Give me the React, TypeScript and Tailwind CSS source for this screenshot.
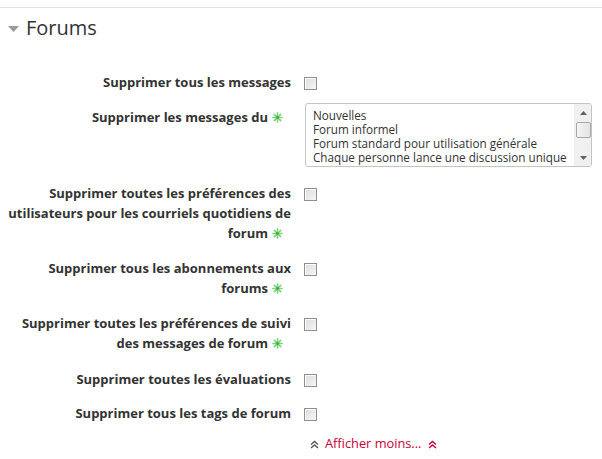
import React from "react";

const FONT = { fontFamily: "'Open Sans', Lato, sans-serif" };

function Check() {
  return (
    <span className="block w-[13px] h-[13px] border border-[#8f8f8f] bg-gradient-to-br from-[#dcdcdc] to-[#f7f7f7] shadow-[inset_1px_1px_0_#ffffff]" />
  );
}

function Star() {
  return (
    <svg width="11" height="11" viewBox="0 0 12 12" className="inline-block ml-[4px] mr-[8px] align-[-1px]">
      <g stroke="#7ed37e" strokeWidth="1.8" strokeLinecap="round">
        <line x1="6" y1="1" x2="6" y2="11" />
        <line x1="1" y1="6" x2="11" y2="6" />
        <line x1="2.5" y1="2.5" x2="9.5" y2="9.5" />
        <line x1="9.5" y1="2.5" x2="2.5" y2="9.5" />
      </g>
      <circle cx="6" cy="6" r="1.6" fill="#3fae3f" />
    </svg>
  );
}

function Row({ label, mb, checkTop = 5, children }: { label: React.ReactNode; mb: string; checkTop?: number; children?: React.ReactNode }) {
  return (
    <div className={`flex ${mb}`}>
      <div className="w-[291px] shrink-0 text-right text-[13px] leading-[20px] font-bold text-[#333] whitespace-nowrap">{label}</div>
      <div className="ml-[13px]" style={{ paddingTop: checkTop }}>
        {children ?? <Check />}
      </div>
    </div>
  );
}

function Chevrons({ color }: { color: string }) {
  return (
    <svg width="9" height="9" viewBox="0 0 9 9" className="inline-block">
      <g stroke={color} strokeWidth="1.4" fill="none">
        <polyline points="1,4.5 4.5,1.5 8,4.5" />
        <polyline points="1,8 4.5,5 8,8" />
      </g>
    </svg>
  );
}

export default function App() {
  return (
    <div className="w-[602px] h-[459px] bg-white overflow-hidden" style={FONT}>
      <div className="pt-[7px]">
        <div className="border-t border-[#e3e3e3]" />
        <div className="flex items-center h-[30px] mt-[5px]">
          <svg width="11" height="6" viewBox="0 0 11 6" className="ml-[8px] mr-[7px] mt-[2px]">
            <polygon points="0,0 11,0 5.5,6" fill="#9a9a9a" />
          </svg>
          <span className="text-[20px] text-[#333]">Forums</span>
        </div>
        <div className="mt-[29px]">
          <Row label="Supprimer tous les messages" mb="mb-[11px]" checkTop={5} />
          <Row
            label={<div className="pt-[4px]">Supprimer les messages du<Star /></div>}
            mb="mb-[16px]"
            checkTop={0}
          >
            <div className="ml-[1px] w-[287px] h-[64px] border border-[#c4c4c4] rounded-[3px] flex overflow-hidden bg-white">
              <div className="flex-1 pl-[7px] pt-[4px] text-[11.7px] leading-[14px] text-[#333] whitespace-nowrap overflow-hidden">
                <div>Nouvelles</div>
                <div>Forum informel</div>
                <div>Forum standard pour utilisation générale</div>
                <div>Chaque personne lance une discussion unique</div>
                <div>Un seul débat simple</div>
              </div>
              <div className="w-[17px] bg-[#f0f0f0] border-l border-[#f0f0f0] flex flex-col items-center">
                <div className="h-[17px] flex items-center justify-center">
                  <svg width="7" height="4" viewBox="0 0 7 4"><polygon points="0,4 7,4 3.5,0" fill="#606060" /></svg>
                </div>
                <div className="w-[15px] h-[16px] mt-[1px] rounded-[2px] border border-[#a8a8a8] bg-gradient-to-r from-[#f4f4f4] to-[#e4e4e4]" />
                <div className="flex-1" />
                <div className="h-[17px] flex items-center justify-center">
                  <svg width="7" height="4" viewBox="0 0 7 4"><polygon points="0,0 7,0 3.5,4" fill="#606060" /></svg>
                </div>
              </div>
            </div>
          </Row>
          <Row
            label={<>Supprimer toutes les préférences des<br />utilisateurs pour les courriels quotidiens de<br />forum<Star /></>}
            mb="mb-[15px]"
          />
          <Row label={<>Supprimer tous les abonnements aux<br />forums<Star /></>} mb="mb-[15px]" />
          <Row label={<>Supprimer toutes les préférences de suivi<br />des messages de forum<Star /></>} mb="mb-[16px]" />
          <Row label="Supprimer toutes les évaluations" mb="mb-[14px]" />
          <Row label="Supprimer tous les tags de forum" mb="mb-[11px]" />
          <div className="ml-[310px] flex items-center h-[20px] text-[12.8px] text-[#c8003a]">
            <Chevrons color="#555" />
            <span className="ml-[6px] mr-[7px]">Afficher moins...</span>
            <Chevrons color="#c8003a" />
          </div>
        </div>
      </div>
    </div>
  );
}
